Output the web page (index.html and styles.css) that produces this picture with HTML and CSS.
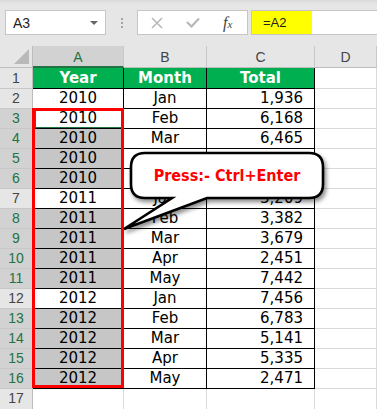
FILE: index.html
```html
<!DOCTYPE html>
<html>
<head lang="en">
    <meta charset="UTF-8">
    <title>Ctrl+Enter</title>
    <link rel="stylesheet" href="styles.css">
</head>
<body>

<div class="toolbar">
    <div class="name-box">
        <span>A3</span>
        <i class="drop"></i>
    </div>
    <div class="grip"><b></b><b></b><b></b></div>
    <div class="fx-buttons">
        <svg class="btn-x" width="12" height="12" viewBox="0 0 12 12"><path d="M1 1L11 11M11 1L1 11" stroke="#b8b8b8" stroke-width="1.6" fill="none"/></svg>
        <svg class="btn-ok" width="14" height="11" viewBox="0 0 14 11"><path d="M1 5L5.5 9.5L13 1.5" stroke="#b8b8b8" stroke-width="2.2" fill="none"/></svg>
        <span class="fx">f<small>x</small></span>
    </div>
    <div class="formula">
        <span class="formula-text">=A2</span>
    </div>
</div>

<div class="sheet-wrap">
    <div class="sheet">
        <!-- column headers -->
        <div class="c corner"><i></i></div>
        <div class="c ch ch-sel">A</div>
        <div class="c ch">B</div>
        <div class="c ch">C</div>
        <div class="c ch">D</div>

        <!-- row 1 -->
        <div class="c rh r1">1</div>
        <div class="c t hd r1">Year</div>
        <div class="c t hd r1">Month</div>
        <div class="c t hd r1">Total</div>
        <div class="c r1"></div>

        <div class="c rh">2</div>
        <div class="c t">2010</div>
        <div class="c t">Jan</div>
        <div class="c t num">1,936</div>
        <div class="c"></div>

        <div class="c rh rh-sel">3</div>
        <div class="c t active">2010</div>
        <div class="c t">Feb</div>
        <div class="c t num">6,168</div>
        <div class="c"></div>

        <div class="c rh rh-sel">4</div>
        <div class="c t sel">2010</div>
        <div class="c t">Mar</div>
        <div class="c t num">6,465</div>
        <div class="c"></div>

        <!-- rows 5 and 6: B and C sit under the callout -->
        <div class="c rh rh-sel">5</div>
        <div class="c t sel">2010</div>
        <div class="c t"></div>
        <div class="c t num"></div>
        <div class="c"></div>

        <div class="c rh rh-sel">6</div>
        <div class="c t sel">2010</div>
        <div class="c t"></div>
        <div class="c t num"></div>
        <div class="c"></div>

        <div class="c rh">7</div>
        <div class="c t">2011</div>
        <div class="c t">Jan</div>
        <div class="c t num">3,209</div>
        <div class="c"></div>

        <div class="c rh rh-sel">8</div>
        <div class="c t sel">2011</div>
        <div class="c t">Feb</div>
        <div class="c t num">3,382</div>
        <div class="c"></div>

        <div class="c rh rh-sel">9</div>
        <div class="c t sel">2011</div>
        <div class="c t">Mar</div>
        <div class="c t num">3,679</div>
        <div class="c"></div>

        <div class="c rh rh-sel">10</div>
        <div class="c t sel">2011</div>
        <div class="c t">Apr</div>
        <div class="c t num">2,451</div>
        <div class="c"></div>

        <div class="c rh rh-sel">11</div>
        <div class="c t sel">2011</div>
        <div class="c t">May</div>
        <div class="c t num">7,442</div>
        <div class="c"></div>

        <div class="c rh">12</div>
        <div class="c t">2012</div>
        <div class="c t">Jan</div>
        <div class="c t num">7,456</div>
        <div class="c"></div>

        <div class="c rh rh-sel">13</div>
        <div class="c t sel">2012</div>
        <div class="c t">Feb</div>
        <div class="c t num">6,783</div>
        <div class="c"></div>

        <div class="c rh rh-sel">14</div>
        <div class="c t sel">2012</div>
        <div class="c t">Mar</div>
        <div class="c t num">5,141</div>
        <div class="c"></div>

        <div class="c rh rh-sel">15</div>
        <div class="c t sel">2012</div>
        <div class="c t">Apr</div>
        <div class="c t num">5,335</div>
        <div class="c"></div>

        <div class="c rh rh-sel">16</div>
        <div class="c t sel">2012</div>
        <div class="c t">May</div>
        <div class="c t num">2,471</div>
        <div class="c"></div>

        <div class="c rh">17</div>
        <div class="c"></div>
        <div class="c"></div>
        <div class="c"></div>
        <div class="c"></div>
    </div>

    <!-- red frame round the filled range -->
    <div class="red-box"></div>

    <!-- callout -->
    <div class="callout">
        <svg width="215" height="90" viewBox="118 148 215 90">
            <path d="M145 153H309Q323 153 323 167V184Q323 198 309 198H207L124 229L172 198H145Q131 198 131 184V167Q131 153 145 153Z"
                  fill="#ffffff" stroke="#000000" stroke-width="2.6" stroke-linejoin="miter"/>
        </svg>
        <div class="callout-text">Press:- Ctrl+Enter</div>
    </div>
</div>

</body>
</html>
```

FILE: styles.css
```css
html, body, div, span {
    padding: 0px;
    margin: 0px;
}

body {
    width: 377px;
    height: 409px;
    overflow: hidden;
    background: #ffffff;
    font-family: "Liberation Sans", Arial, sans-serif;
}

/* formula bar */
.toolbar {
    height: 46px;
    box-sizing: border-box;
    padding: 10px 0px 0px 5px;
    background: linear-gradient(#d9d9d9, #e6e6e6 4px);
    display: flex;
    align-items: flex-start;
}

.name-box {
    width: 101px;
    height: 25px;
    box-sizing: border-box;
    border: 1px solid #c6c6c6;
    background: #ffffff;
    display: flex;
    align-items: center;
    justify-content: space-between;
    padding: 0px 7px 0px 7px;
    font-size: 14px;
    color: #222222;
}

.drop {
    width: 0px;
    height: 0px;
    border-left: 4px solid transparent;
    border-right: 4px solid transparent;
    border-top: 4px solid #666666;
}

.grip {
    width: 31px;
    height: 25px;
    display: flex;
    flex-direction: column;
    align-items: center;
    justify-content: center;
    gap: 2px;
}

.grip b {
    width: 2px;
    height: 2px;
    background: #a6a6a6;
}

.fx-buttons {
    width: 111px;
    height: 25px;
    box-sizing: border-box;
    border: 1px solid #c6c6c6;
    background: #ffffff;
    display: flex;
    align-items: center;
    padding-left: 13px;
}

.btn-ok {
    margin-left: 23px;
}

.fx {
    margin-left: 23px;
    font-family: "Liberation Serif", serif;
    font-style: italic;
    font-size: 16px;
    color: #444444;
}

.fx small {
    font-size: 11px;
}

.formula {
    flex: 1;
    margin-left: 3px;
    height: 25px;
    box-sizing: border-box;
    border: 1px solid #c6c6c6;
    border-right: none;
    background: linear-gradient(90deg, #ffff00 60px, #ffffff 60px);
    display: flex;
    align-items: center;
    padding-left: 11px;
    font-size: 13px;
    color: #222222;
}

/* grid */
.sheet-wrap {
    position: relative;
}

.sheet {
    display: grid;
    grid-template-columns: 33px 91px 83px 108px 1fr;
    grid-template-rows: 22px 21px repeat(15, 20px) 21px;
}

.c {
    box-sizing: border-box;
    border-right: 1px solid #d9d9d9;
    border-bottom: 1px solid #d9d9d9;
    font-family: "DejaVu Sans", Verdana, sans-serif;
    font-size: 15px;
    line-height: 19px;
    color: #000000;
    text-align: center;
    white-space: nowrap;
    overflow: hidden;
}

.corner {
    background: #e6e6e6;
    border-right: 1px solid #bdbdbd;
    border-bottom: 1px solid #bdbdbd;
    position: relative;
}

.corner i {
    position: absolute;
    right: 3px;
    bottom: 3px;
    width: 0px;
    height: 0px;
    border-left: 15px solid transparent;
    border-bottom: 15px solid #b9b9b9;
}

.ch {
    background: #e6e6e6;
    border-right: 1px solid #c8c8c8;
    border-bottom: 1px solid #bdbdbd;
    font-family: "Liberation Sans", Arial, sans-serif;
    font-size: 14px;
    line-height: 22px;
    color: #444444;
}

.ch-sel {
    background: #d2d2d2;
    border-bottom: 2px solid #217346;
    color: #217346;
}

.rh {
    background: #e6e6e6;
    border-right: 1px solid #bdbdbd;
    border-bottom: 1px solid #c8c8c8;
    font-family: "Liberation Sans", Arial, sans-serif;
    font-size: 14px;
    color: #444444;
}

.rh-sel {
    background: #d2d2d2;
    color: #217346;
}

.r1 {
    line-height: 21px;
}

.t {
    border-right: 1px solid #000000;
    border-bottom: 1px solid #000000;
}

.hd {
    background: #00b050;
    color: #ffffff;
    font-weight: bold;
}

.num {
    text-align: right;
    padding-right: 11px;
}

.sel {
    background: #c6c6c6;
}

.active {
    box-shadow: inset 2px 1px 0px #ffffff, inset 3px 2px 0px #217346, inset -1px -1px 0px #217346;
}

.red-box {
    position: absolute;
    left: 32px;
    top: 62px;
    width: 92px;
    height: 280px;
    box-sizing: border-box;
    border: 3px solid #ff0000;
}

.callout {
    position: absolute;
    left: 118px;
    top: 102px;
    width: 215px;
    height: 90px;
}

.callout svg {
    display: block;
    overflow: visible;
    filter: drop-shadow(2px 3px 2px rgba(0, 0, 0, 0.45));
}

.callout-text {
    position: absolute;
    left: 13px;
    top: 5px;
    width: 192px;
    height: 45px;
    display: flex;
    align-items: center;
    justify-content: center;
    font-family: "DejaVu Sans Condensed", "DejaVu Sans", sans-serif;
    font-stretch: condensed;
    font-weight: bold;
    font-size: 16px;
    color: #ff0000;
}
```
